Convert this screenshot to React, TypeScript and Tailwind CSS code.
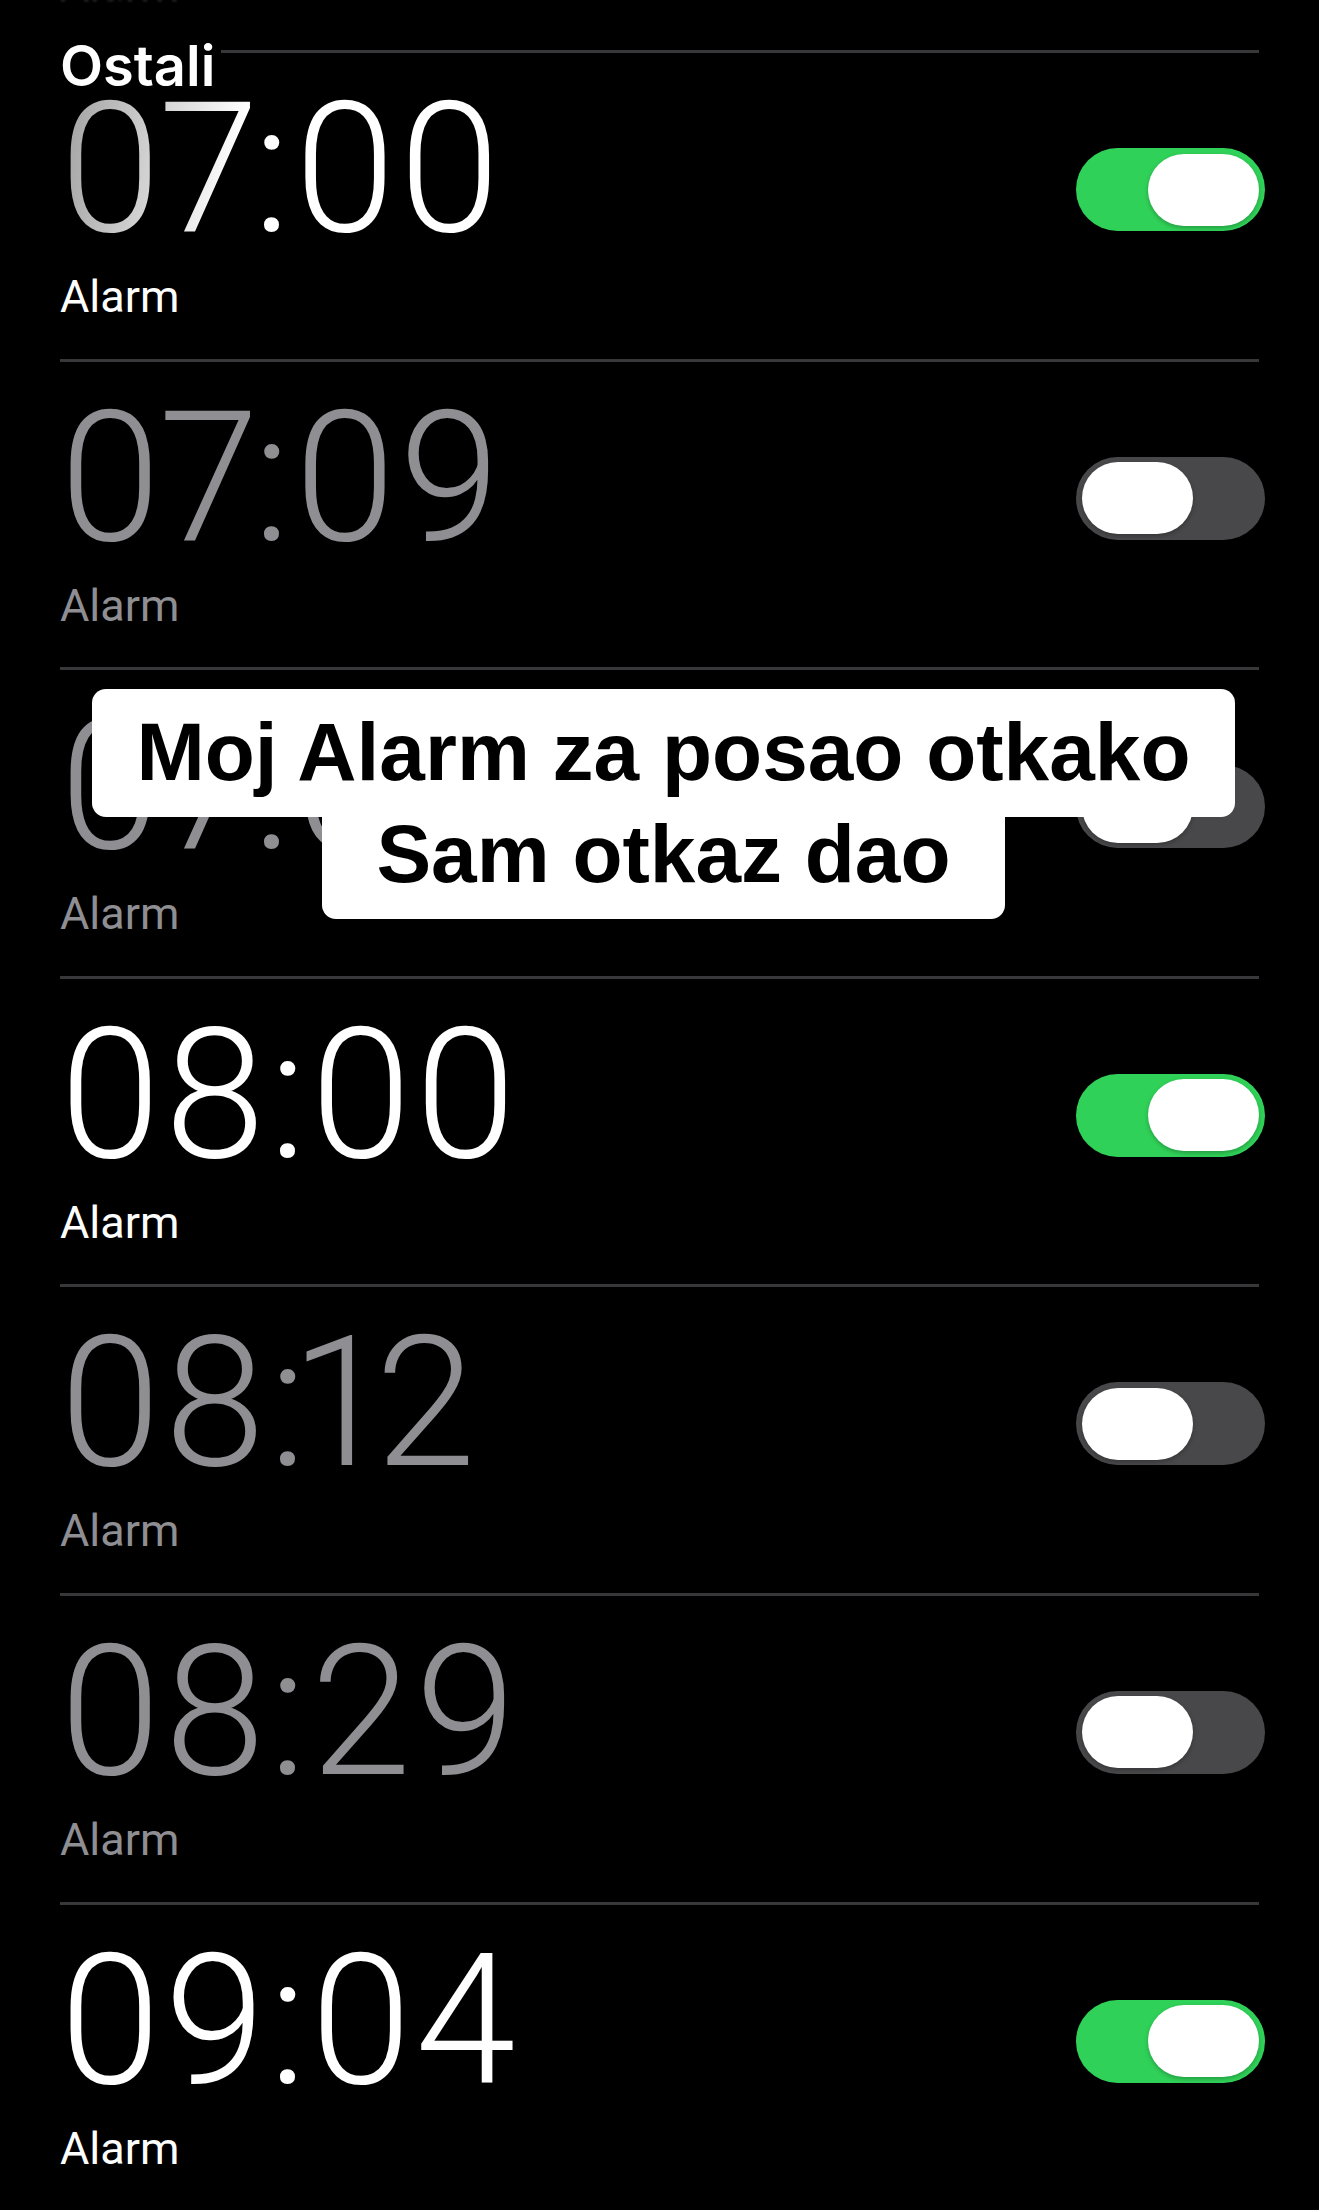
import React from "react";

type Alarm = { time: string; on: boolean };

const alarms: Alarm[] = [
  { time: "07:00", on: true },
  { time: "07:09", on: false },
  { time: "07:05", on: false },
  { time: "08:00", on: true },
  { time: "08:12", on: false },
  { time: "08:29", on: false },
  { time: "09:04", on: true },
];

const sysFont = { fontFamily: "Roboto, 'Noto Sans', sans-serif" };

// Narrow glyphs get tighter sidebearings so the clock digits read proportionally.
function TimeText({ time }: { time: string }) {
  return (
    <>
      {time.split("").map((ch, i) => {
        if (ch === "1") return <span key={i} className="-ml-[20px] -mr-[20px]">{ch}</span>;
        if (ch === "7") return <span key={i} className="-ml-[6px] -mr-[10px]">{ch}</span>;
        return <span key={i}>{ch}</span>;
      })}
    </>
  );
}

function Toggle({ on }: { on: boolean }) {
  return (
    <div
      className={
        "mt-[95px] -mr-[6px] flex h-[83px] w-[189px] shrink-0 items-center rounded-full px-[6px] " +
        (on ? "justify-end bg-[#30d158]" : "justify-start bg-[#48484a]")
      }
    >
      <div className="h-[72px] w-[111px] rounded-full bg-white shadow-[0_2px_4px_rgba(0,0,0,0.25)]" />
    </div>
  );
}

function AlarmRow({ alarm, first }: { alarm: Alarm; first: boolean }) {
  const color = alarm.on ? "text-white" : "text-[#8e8e93]";
  const timeCls = "whitespace-nowrap text-[181px] leading-[181px] font-light tracking-[4px]";
  return (
    <div className="flex h-[308.6px] items-start justify-between border-t-[3px] border-[#38383a]">
      <div className="pt-[26px]" style={sysFont}>
        {first ? (
          <div
            className={
              timeCls +
              " bg-[linear-gradient(100deg,#9d9d9d_0px,#d6d6d6_110px,#ffffff_190px)] bg-clip-text text-transparent"
            }
          >
            <TimeText time={alarm.time} />
          </div>
        ) : (
          <div className={timeCls + " " + color}>
            <TimeText time={alarm.time} />
          </div>
        )}
        <div className={"mt-[11px] text-[45px] leading-[52px] font-normal " + color}>Alarm</div>
      </div>
      <Toggle on={alarm.on} />
    </div>
  );
}

export default function App() {
  return (
    <div className="relative min-h-[2210px] w-full overflow-hidden bg-black">
      {/* tail of the previous list entry, scrolled under the top edge */}
      <div className="h-[50px] px-[60px]" style={sysFont}>
        <div className="h-[8px] overflow-hidden opacity-60 blur-[1px]">
          <div className="-mt-[40px] text-[45px] leading-[52px] text-[#8e8e93]">Alarm</div>
        </div>
      </div>

      <div className="px-[60px]">
        {alarms.map((a, i) => (
          <AlarmRow key={i} alarm={a} first={i === 0} />
        ))}
      </div>

      {/* section header */}
      <div
        className="absolute left-[60px] top-[38px] bg-black pr-[6px] text-[56px] leading-[56px] font-semibold text-white"
        style={{ fontFamily: "Inter, 'Noto Sans', sans-serif" }}
      >
        Ostali
      </div>

      {/* caption */}
      <div
        className="absolute left-0 right-0 top-[689px] flex translate-x-[4px] flex-col items-center"
        style={{ fontFamily: "'Liberation Sans', Arial, sans-serif" }}
      >
        <div className="h-[128px] whitespace-nowrap rounded-[14px] bg-white px-[44px] pt-[26px] text-[82px] leading-[74px] font-bold text-black">
          Moj Alarm za posao otkako
        </div>
        <div className="h-[102px] whitespace-nowrap rounded-b-[14px] bg-white px-[54px] text-[82px] leading-[74px] font-bold text-black">
          Sam otkaz dao
        </div>
      </div>
    </div>
  );
}
